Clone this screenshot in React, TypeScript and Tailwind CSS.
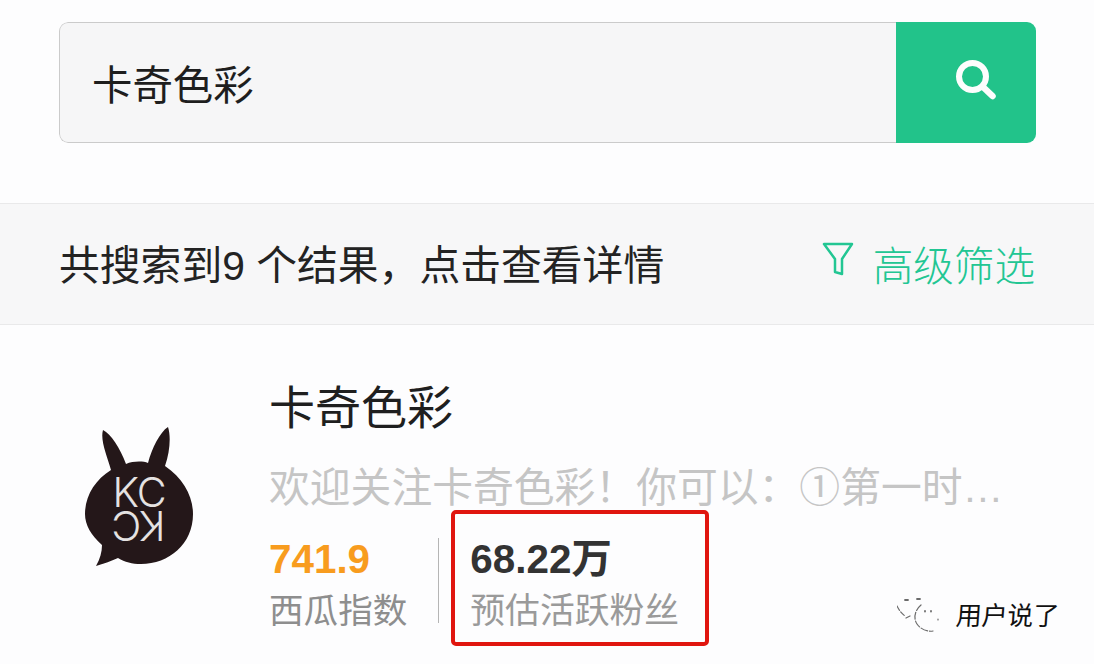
const cjk = "font-['Liberation_Sans','Noto_Sans_CJK_SC',sans-serif]";

function Logo() {
  return (
    <svg width="112" height="142" viewBox="0 0 112 142" className="block">
      <path
        d="M20 6 C28 10 37 24 43 40 C50 37 60 37 65 39 C69 24 77 8 85 3 C88 12 87 28 82 42 C100 54 110 72 110 90 C110 120 86 140 58 140 C49 140 42 138 35 134 C28 137 20 140 13 142 C17 135 19 128 19 121 C8 111 2 101 2 90 C2 72 12 56 28 46 C24 32 17 16 20 6 Z"
        fill="#241719"
      />
    </svg>
  );
}

export default function App() {
  return (
    <div className={`relative h-[664px] w-[1094px] overflow-hidden bg-[#fdfdfe] pt-[22px] ${cjk}`}>
      <div className="ml-[59px] mr-[58px] flex h-[121px] overflow-hidden rounded-[9px]">
        <div className="flex flex-1 items-center rounded-l-[9px] border border-r-0 border-[#cbcbcb] bg-[#f6f6f7] pl-[32px] pt-[8px] text-[40.4px] text-[#1e1e1e]">
          卡奇色彩
        </div>
        <div className="flex w-[140px] items-center justify-center bg-[#22c38a] pb-[6px] pl-[20px]">
          <svg width="44" height="44" viewBox="0 0 44 44" fill="none" stroke="#fdfdfd" strokeLinecap="round">
            <circle cx="18.5" cy="18.5" r="13.5" strokeWidth="6" />
            <path d="M29 29 L38.5 38" strokeWidth="6.5" />
          </svg>
        </div>
      </div>

      <div className="mt-[60px] flex h-[122px] items-center justify-between border-y border-[#e9e9ea] bg-[#f7f7f8] pl-[59px] pr-[59px]">
        <span className="pt-[6px] text-[40.8px] text-[#232323]">共搜索到9 个结果，点击查看详情</span>
        <div className="flex items-center gap-[19px] text-[#22c693]">
          <svg width="32" height="36" viewBox="0 0 32 36" fill="none" stroke="#22c693" strokeWidth="2.5" strokeLinejoin="round" className="-mt-[8px]">
            <path d="M2 2 H30 L20 17 V32 L13 30 V17 Z" />
          </svg>
          <span className="pt-[6px] text-[40.6px] font-light">高级筛选</span>
        </div>
      </div>

      <div className="flex pl-[83px] pt-[62px]">
        <div className="relative mt-[37px] w-[112px]">
          <Logo />
          <div className="absolute left-[25px] top-[52px] w-[62px] text-center font-['Inter',sans-serif] text-[41px] font-light leading-[33px] tracking-[-1px] text-[#e5e2e2]">
            <div>KC</div>
            <div className="rotate-180">KC</div>
          </div>
        </div>
        <div className="ml-[74px] flex-1">
          <div className="-mt-[10px] text-[46px] leading-[62px] text-[#1f1f1f]">卡奇色彩</div>
          <div className="mt-[24px] text-[40.8px] leading-[50px] whitespace-nowrap text-[#c5c5c5]">
            欢迎关注卡奇色彩！你可以：①第一时…
          </div>
          <div className="-mt-[3px] flex">
            <div className="flex flex-col pt-[25px]">
              <span className="text-[40.4px] leading-[48px] font-bold text-[#f89c1e]">741.9</span>
              <span className="mt-[4px] text-[34.6px] leading-[48px] text-[#8e8e8e]">西瓜指数</span>
            </div>
            <div className="ml-[31px] mt-[28px] h-[85px] w-[1px] bg-[#b5b5b5]" />
            <div className="ml-[12px] flex h-[136px] w-[258px] flex-col rounded-[5px] border-[4px] border-[#e0150f] pl-[15px] pt-[21px]">
              <span className="text-[40.4px] leading-[48px] font-bold text-[#333333]">68.22万</span>
              <span className="mt-[4px] text-[34.8px] leading-[48px] text-[#9a9a9a]">预估活跃粉丝</span>
            </div>
          </div>
        </div>
      </div>

      <div className="absolute left-[897px] top-[598px] flex items-center">
        <svg width="46" height="36" viewBox="0 0 46 36" fill="none" stroke="#6b6b6b" strokeWidth="1.2" strokeLinecap="round">
          <path d="M0 8 C2 12 4 15 8 18" strokeDasharray="5 2" />
          <path d="M8 2 H11 M20 1 H23" strokeWidth="1.8" />
          <path d="M24 7 C18 12 16 20 20 26 C24 32 32 34 36 33" strokeDasharray="7 2" />
          <path d="M9 20 L13 18 M41 21 V22" />
          <path d="M28 13 V13.5 M34 13 V13.5" strokeWidth="1.8" />
        </svg>
        <span className="ml-[13px] skew-x-[-4deg] text-[26px] leading-[36px] tracking-[-0.3px] text-[#111111]">用户说了</span>
      </div>
    </div>
  );
}
